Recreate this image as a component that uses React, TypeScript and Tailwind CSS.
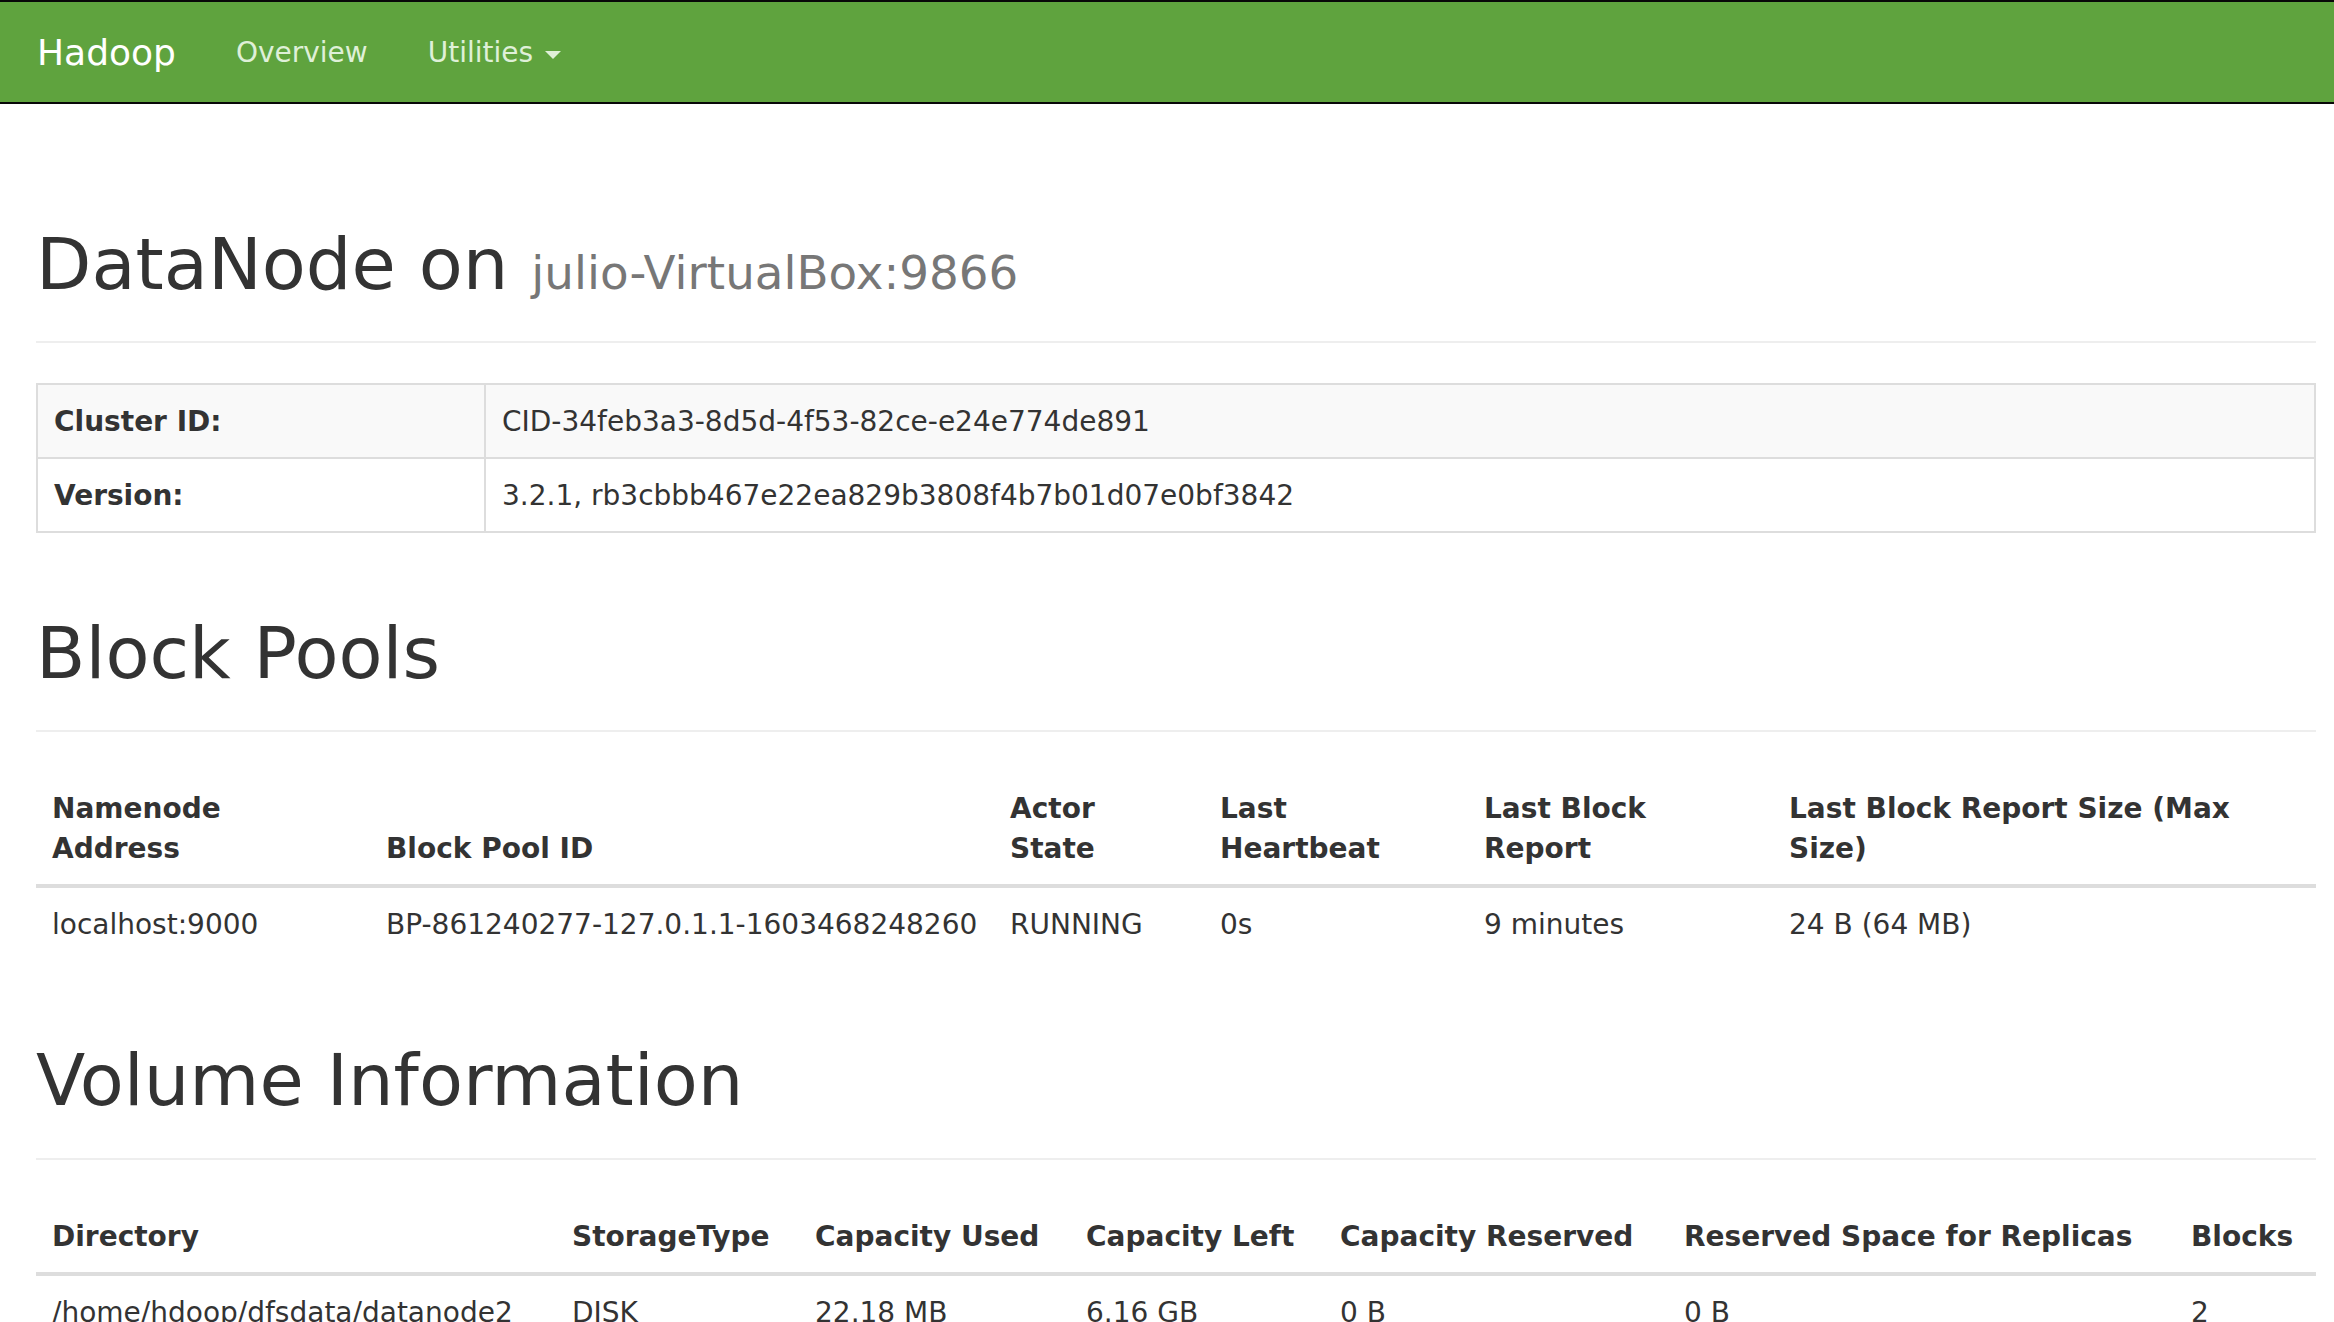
import React from 'react';

const font = "font-['DejaVu_Sans',sans-serif]";

// 页面标题
const PageHeader: React.FC<{ children: React.ReactNode }> = ({ children }) => (
  <div className="mt-[81px] mb-[40px] pb-[17px] border-b-2 border-[#eeeeee]">
    <h1 className="text-[72px] leading-[1.1] font-normal text-[#333333] mb-[20px]">{children}</h1>
  </div>
);

const th = 'p-[16px] pt-[17px] pb-[15px] text-left align-bottom font-bold border-b-4 border-[#dddddd]';
const td = 'p-[16px] pt-[17px] pb-[15px] text-left align-top';

const App: React.FC = () => {
  return (
    <div className={`${font} bg-white text-[#333333] text-[28px] leading-[40px] min-h-[1322px]`}>
      {/* 导航栏 */}
      <div className="h-[104px] bg-[#5fa33e] border-y-2 border-[#080808] mb-[40px] flex items-center pt-[2px]">
        <span className="pl-[37px] pr-[30px] text-[36px] leading-[40px] text-white">Hadoop</span>
        <span className="px-[30px] text-[#dff0d8]">Overview</span>
        <span className="px-[30px] text-[#dff0d8] flex items-center">
          Utilities
          <span className="inline-block w-0 h-0 ml-[12px] mt-[4px] border-t-[8px] border-x-[8px] border-x-transparent border-t-[#dff0d8]" />
        </span>
      </div>

      <div className="ml-[36px] w-[2280px] flow-root">
        <PageHeader>
          DataNode on <small className="text-[46.8px] text-[#777777]">julio-VirtualBox:9866</small>
        </PageHeader>

        <table className="w-full table-fixed border-collapse mb-[40px]">
          <tbody>
            <tr className="bg-[#f9f9f9]">
              <th className="w-[448px] px-[16px] pt-[17px] pb-[15px] text-left font-bold border-2 border-[#dddddd]">Cluster ID:</th>
              <td className="px-[16px] pt-[17px] pb-[15px] border-2 border-[#dddddd]">CID-34feb3a3-8d5d-4f53-82ce-e24e774de891</td>
            </tr>
            <tr>
              <th className="px-[16px] pt-[17px] pb-[15px] text-left font-bold border-2 border-[#dddddd]">Version:</th>
              <td className="px-[16px] pt-[17px] pb-[15px] border-2 border-[#dddddd]">3.2.1, rb3cbbb467e22ea829b3808f4b7b01d07e0bf3842</td>
            </tr>
          </tbody>
        </table>

        <PageHeader>Block Pools</PageHeader>

        <table className="w-full table-fixed border-collapse mb-[40px]">
          <thead>
            <tr>
              <th className={`${th} w-[334px]`}>Namenode<br />Address</th>
              <th className={`${th} w-[624px]`}>Block Pool ID</th>
              <th className={`${th} w-[210px]`}>Actor<br />State</th>
              <th className={`${th} w-[264px]`}>Last<br />Heartbeat</th>
              <th className={`${th} w-[305px]`}>Last Block<br />Report</th>
              <th className={`${th} w-[543px]`}>Last Block Report Size (Max<br />Size)</th>
            </tr>
          </thead>
          <tbody>
            <tr>
              <td className={td}>localhost:9000</td>
              <td className={td}>BP-861240277-127.0.1.1-1603468248260</td>
              <td className={td}>RUNNING</td>
              <td className={td}>0s</td>
              <td className={td}>9 minutes</td>
              <td className={td}>24 B (64 MB)</td>
            </tr>
          </tbody>
        </table>

        <PageHeader>Volume Information</PageHeader>

        <table className="w-full table-fixed border-collapse mb-[40px]">
          <thead>
            <tr>
              <th className={`${th} w-[520px]`}>Directory</th>
              <th className={`${th} w-[243px]`}>StorageType</th>
              <th className={`${th} w-[271px]`}>Capacity Used</th>
              <th className={`${th} w-[254px]`}>Capacity Left</th>
              <th className={`${th} w-[344px]`}>Capacity Reserved</th>
              <th className={`${th} w-[507px]`}>Reserved Space for Replicas</th>
              <th className={`${th} w-[141px]`}>Blocks</th>
            </tr>
          </thead>
          <tbody>
            <tr>
              <td className={td}>/home/hdoop/dfsdata/datanode2</td>
              <td className={td}>DISK</td>
              <td className={td}>22.18 MB</td>
              <td className={td}>6.16 GB</td>
              <td className={td}>0 B</td>
              <td className={td}>0 B</td>
              <td className={td}>2</td>
            </tr>
          </tbody>
        </table>
      </div>
    </div>
  );
};

export default App;
